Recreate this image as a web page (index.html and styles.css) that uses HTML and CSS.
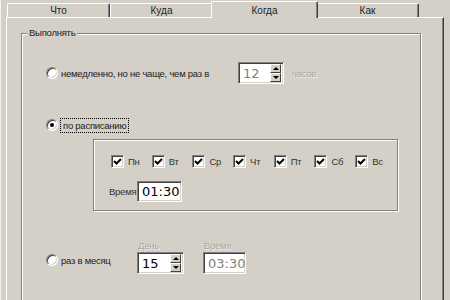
FILE: index.html
```html
<!DOCTYPE html>
<html>
<head>
<meta charset="utf-8">
<title>Когда</title>
<link rel="stylesheet" href="styles.css">
</head>
<body>
  <div class="screen">
    <!-- tabs -->
    <div class="tabs">
      <div class="tab">Что</div>
      <div class="tab">Куда</div>
      <div class="tab active">Когда</div>
      <div class="tab">Как</div>
    </div>

    <!-- page -->
    <div class="panel">
      <div class="group">
        <span class="legend">Выполнять</span>

        <div class="row row-now">
          <label class="opt opt-now"><span class="radio"></span>немедленно, но не чаще, чем раз в</label>
          <span class="spin spin-hours disabled">
            <span class="val">12</span>
            <span class="arrows"><i class="up"></i><i class="down"></i></span>
          </span>
          <span class="muted unit">часов</span>
        </div>

        <div class="row row-sched">
          <label class="opt"><span class="radio on"></span><span class="focus">по расписанию</span></label>
        </div>

        <div class="days">
          <div class="week">
            <label class="day"><span class="check"><svg viewBox="0 0 9 9" width="9" height="9"><path d="M1 4 L3.5 6.5 L8 2" fill="none" stroke="#000" stroke-width="2"/></svg></span>Пн</label>
            <label class="day"><span class="check"><svg viewBox="0 0 9 9" width="9" height="9"><path d="M1 4 L3.5 6.5 L8 2" fill="none" stroke="#000" stroke-width="2"/></svg></span>Вт</label>
            <label class="day"><span class="check"><svg viewBox="0 0 9 9" width="9" height="9"><path d="M1 4 L3.5 6.5 L8 2" fill="none" stroke="#000" stroke-width="2"/></svg></span>Ср</label>
            <label class="day"><span class="check"><svg viewBox="0 0 9 9" width="9" height="9"><path d="M1 4 L3.5 6.5 L8 2" fill="none" stroke="#000" stroke-width="2"/></svg></span>Чт</label>
            <label class="day"><span class="check"><svg viewBox="0 0 9 9" width="9" height="9"><path d="M1 4 L3.5 6.5 L8 2" fill="none" stroke="#000" stroke-width="2"/></svg></span>Пт</label>
            <label class="day"><span class="check"><svg viewBox="0 0 9 9" width="9" height="9"><path d="M1 4 L3.5 6.5 L8 2" fill="none" stroke="#000" stroke-width="2"/></svg></span>Сб</label>
            <label class="day"><span class="check"><svg viewBox="0 0 9 9" width="9" height="9"><path d="M1 4 L3.5 6.5 L8 2" fill="none" stroke="#000" stroke-width="2"/></svg></span>Вс</label>
          </div>
          <div class="time-row">
            <span class="time-label">Время</span>
            <span class="field field-time"><span class="val">01:30</span></span>
          </div>
        </div>

        <div class="row row-month">
          <label class="opt opt-month"><span class="radio"></span>раз в месяц</label>
          <div class="col col-day">
            <span class="muted cap">День</span>
            <span class="spin spin-day">
              <span class="val">15</span>
              <span class="arrows"><i class="up"></i><i class="down"></i></span>
            </span>
          </div>
          <div class="col col-mtime">
            <span class="muted cap">Время</span>
            <span class="field field-mtime disabled"><span class="val">03:30</span></span>
          </div>
        </div>
      </div>
    </div>
  </div>
</body>
</html>
```

FILE: styles.css
```css
* {box-sizing: border-box;}

body {
  margin: 0;
  background: #d4d0c8;
  font-family: "Liberation Sans", Arial, sans-serif;
  font-size: 9.5px;
  letter-spacing: -0.25px;
  color: #000;
}

.screen {
  width: 450px;
  height: 300px;
  overflow: hidden;
  border-left: 1px solid #f4f3f0;
}

/* tabs */
.tabs {
  display: flex;
  align-items: flex-end;
  height: 17px;
  padding-left: 6px;
}

.tab {
  width: 103px;
  height: 14px;
  border-top: 1px solid #fff;
  border-left: 1px solid #fff;
  border-right: 1px solid #404040;
  box-shadow: inset -1px 0 0 #808080;
  border-radius: 2px 2px 0 0;
  text-align: center;
  line-height: 13px;
  font-size: 10px;
  letter-spacing: 0;
  color: #222;
}

.tab.active {
  position: relative;
  z-index: 2;
  width: 107px;
  height: 17px;
  margin: 0 -2px -1px;
  background: #d4d0c8;
  line-height: 17px;
}

/* page */
.panel {
  width: 438px;
  height: 290px;
  margin-left: 5px;
  border-top: 1px solid #fff;
  border-left: 1px solid #fff;
  border-right: 1px solid #404040;
  box-shadow: inset -1px 0 0 #808080;
  padding: 15px 0 0 14px;
}

.group {
  position: relative;
  width: 400px;
  height: 280px;
  border: 1px solid #808080;
  box-shadow: inset 1px 1px 0 #fff, 1px 1px 0 #fff;
  padding: 28px 0 0 24px;
}

.legend {
  position: absolute;
  left: 5px;
  top: -7px;
  padding: 0 2px;
  background: #d4d0c8;
  line-height: 12px;
  color: #222;
}

.row {
  display: flex;
  align-items: center;
}

.opt {
  display: flex;
  align-items: center;
  gap: 3px;
  height: 14px;
  color: #222;
}

.opt-now {
  width: 192px;
}

.radio {
  width: 12px;
  height: 12px;
  border-radius: 50%;
  background: #fff;
  border: 1px solid;
  border-color: #808080 #fff #fff #808080;
  box-shadow: inset 1px 1px 0 #404040, inset -1px -1px 0 #d4d0c8;
  display: flex;
  align-items: center;
  justify-content: center;
}

.radio.on::after {
  content: "";
  width: 4px;
  height: 4px;
  border-radius: 50%;
  background: #000;
}

.focus {
  outline: 1px dotted #000;
  padding: 0 2px;
  line-height: 13px;
}

.muted {
  color: #a6a6a6;
  text-shadow: 1px 1px 0 #f2f1ee;
}

.unit {
  margin-left: 8px;
}

/* edit boxes */
.spin,
.field {
  display: flex;
  align-items: center;
  height: 22px;
  background: #fff;
  border: 1px solid;
  border-color: #808080 #fff #fff #808080;
  box-shadow: inset 1px 1px 0 #404040, inset -1px -1px 0 #d4d0c8;
  padding: 2px 2px 2px 4px;
  font-family: "DejaVu Sans", sans-serif;
  font-size: 13px;
  letter-spacing: 0;
  color: #000;
}

.spin .val,
.field .val {
  flex: 1;
}

.disabled {
  color: #808080;
}

.spin-hours {
  width: 46px;
}

.spin-day {
  width: 47px;
}

.field-time {
  width: 45px;
  height: 21px;
}

.field-mtime {
  width: 43px;
}

.arrows {
  display: flex;
  flex-direction: column;
  width: 11px;
  height: 18px;
}

.arrows i {
  flex: 1;
  display: flex;
  align-items: center;
  justify-content: center;
  background: #d4d0c8;
  border: 1px solid;
  border-color: #fff #404040 #404040 #fff;
}

.arrows i::after {
  content: "";
  border-left: 3px solid transparent;
  border-right: 3px solid transparent;
}

.arrows .up::after {
  border-bottom: 3px solid #000;
}

.arrows .down::after {
  border-top: 3px solid #000;
}

.row-sched {
  margin-top: 34px;
}

/* weekday box */
.days {
  width: 305px;
  height: 72px;
  margin: 7px 0 0 47px;
  border: 1px solid #808080;
  box-shadow: inset 1px 1px 0 #fff, 1px 1px 0 #fff;
  padding: 15px 0 0 17px;
}

.week {
  display: grid;
  grid-template-columns: repeat(7, 40.7px);
}

.day {
  display: flex;
  align-items: center;
  gap: 4px;
  height: 13px;
  color: #333;
}

.check {
  width: 13px;
  height: 13px;
  background: #fff;
  border: 1px solid;
  border-color: #808080 #fff #fff #808080;
  box-shadow: inset 1px 1px 0 #404040, inset -1px -1px 0 #d4d0c8;
  display: flex;
  align-items: center;
  justify-content: center;
}

.check svg {
  display: block;
}

.time-row {
  display: flex;
  align-items: center;
  margin: 13px 0 0 -2px;
}

.time-label {
  width: 28px;
  color: #333;
}

/* monthly */
.row-month {
  align-items: flex-end;
  margin-top: 28px;
}

.opt-month {
  width: 91px;
  margin-bottom: 7px;
}

.col {
  display: flex;
  flex-direction: column;
}

.cap {
  line-height: 13px;
  margin-left: 1px;
}

.col-mtime {
  margin-left: 19px;
}
```
